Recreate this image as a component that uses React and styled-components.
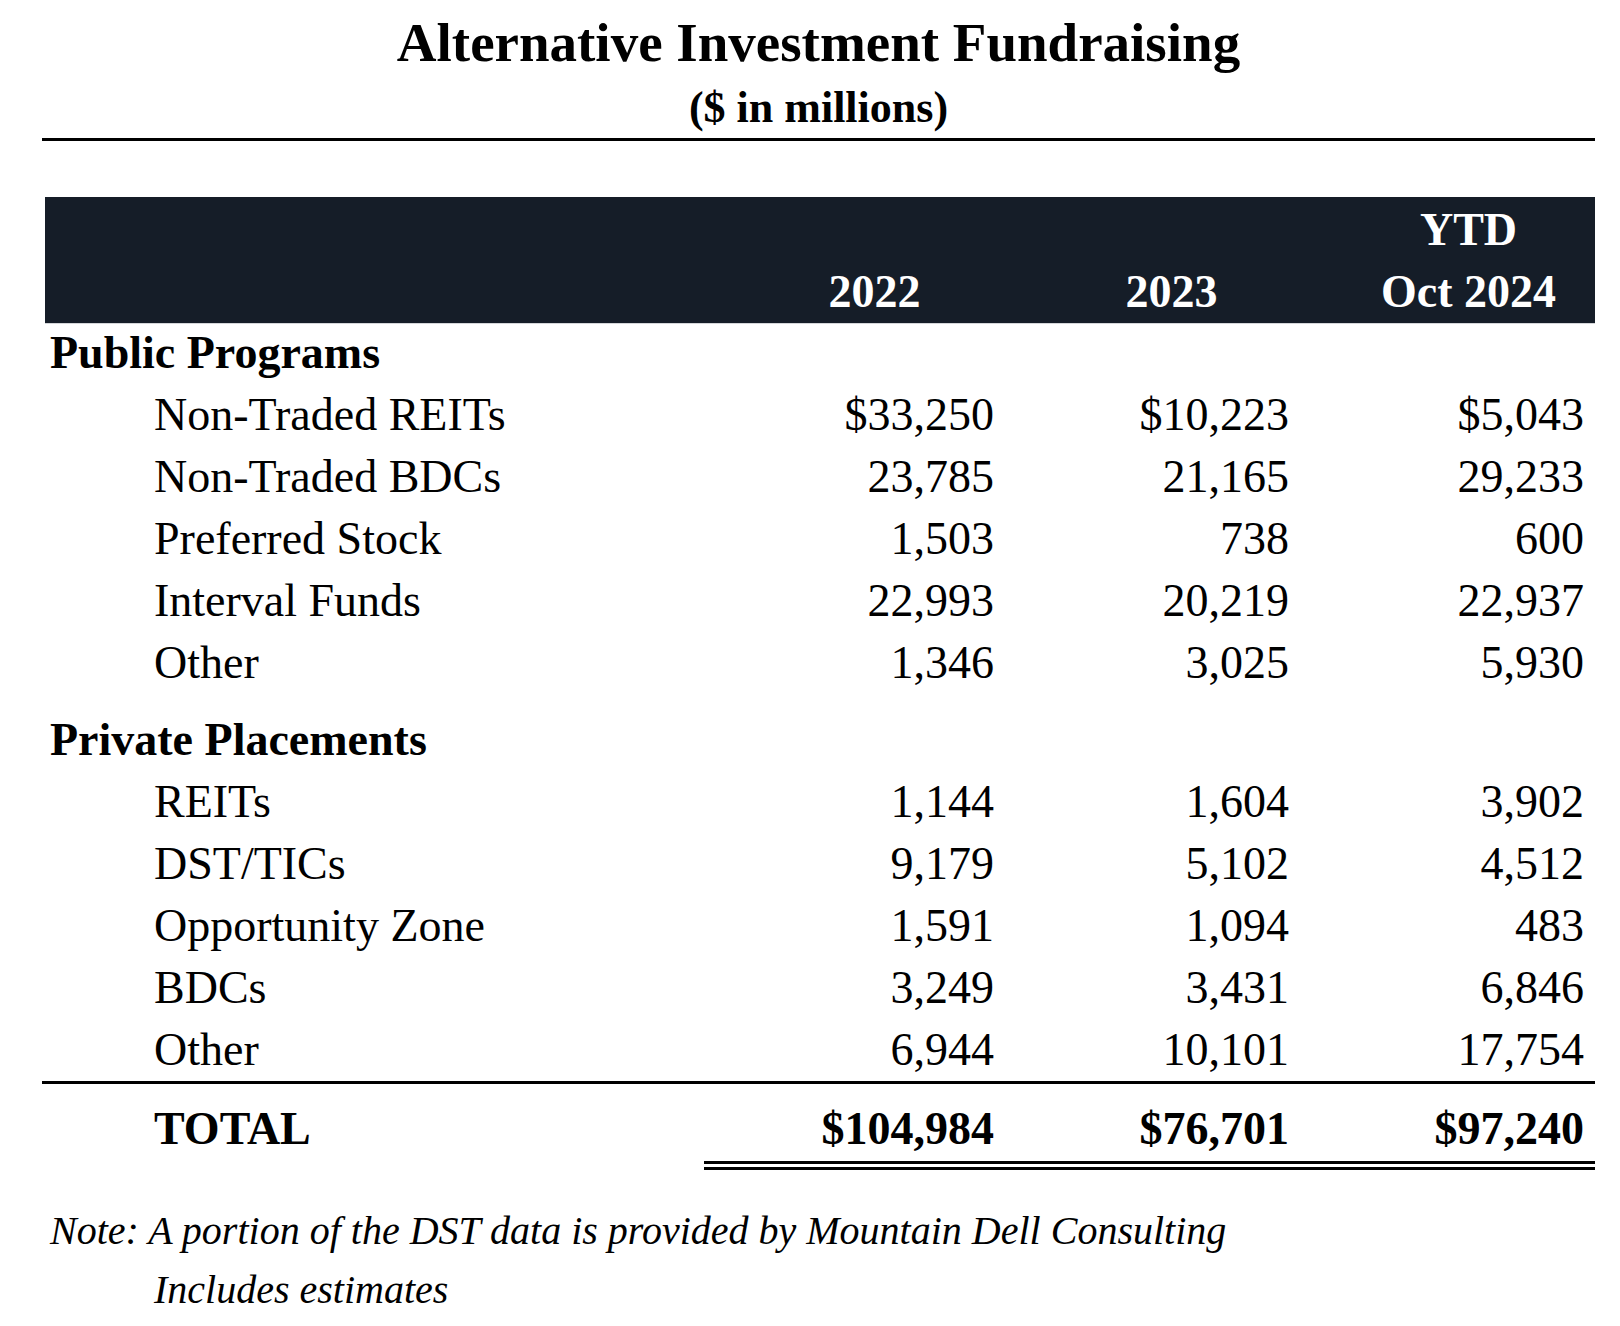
import React from "react";
import styled, { createGlobalStyle } from "styled-components";

// FUNDRAISING SUMMARY TABLE

const publicRows = [
  { label: "Non-Traded REITs", values: ["$33,250", "$10,223", "$5,043"] },
  { label: "Non-Traded BDCs", values: ["23,785", "21,165", "29,233"] },
  { label: "Preferred Stock", values: ["1,503", "738", "600"] },
  { label: "Interval Funds", values: ["22,993", "20,219", "22,937"] },
  { label: "Other", values: ["1,346", "3,025", "5,930"] },
];

const privateRows = [
  { label: "REITs", values: ["1,144", "1,604", "3,902"] },
  { label: "DST/TICs", values: ["9,179", "5,102", "4,512"] },
  { label: "Opportunity Zone", values: ["1,591", "1,094", "483"] },
  { label: "BDCs", values: ["3,249", "3,431", "6,846"] },
  { label: "Other", values: ["6,944", "10,101", "17,754"] },
];

const totals = ["$104,984", "$76,701", "$97,240"];

// right padding of each value column
const colPad = [7, 9, 11];

const App = () => {
  return (
    <>
      <GlobalStyle />
      <Page>
        <Title>Alternative Investment Fundraising</Title>
        <Subtitle>($ in millions)</Subtitle>
        <TopRule />

        <Table>
          <HeaderBand>
            <HeadRow>
              <span />
              <HeadCell>2022</HeadCell>
              <HeadCell>2023</HeadCell>
              <HeadCell>
                YTD
                <br />
                Oct 2024
              </HeadCell>
            </HeadRow>
          </HeaderBand>

          <Row>
            <SectionLabel>Public Programs</SectionLabel>
          </Row>
          {publicRows.map((row, i) => (
            <Row key={"pub" + i}>
              <ItemLabel>{row.label}</ItemLabel>
              {row.values.map((v, j) => (
                <Value key={j} $pad={colPad[j]}>
                  {v}
                </Value>
              ))}
            </Row>
          ))}

          <Row $spaced>
            <SectionLabel>Private Placements</SectionLabel>
          </Row>
          {privateRows.map((row, i) => (
            <Row key={"priv" + i} $last={i === privateRows.length - 1}>
              <ItemLabel>{row.label}</ItemLabel>
              {row.values.map((v, j) => (
                <Value key={j} $pad={colPad[j]}>
                  {v}
                </Value>
              ))}
            </Row>
          ))}

          <TotalRow>
            <TotalLabel>TOTAL</TotalLabel>
            {totals.map((v, j) => (
              <TotalValue key={j} $pad={colPad[j]}>
                {v}
              </TotalValue>
            ))}
          </TotalRow>
        </Table>

        <Notes>
          <Note>Note: A portion of the DST data is provided by Mountain Dell Consulting</Note>
          <Note $indent>Includes estimates</Note>
        </Notes>
      </Page>
    </>
  );
};

const GlobalStyle = createGlobalStyle`
  body {
    margin: 0;
    background: #ffffff;
    color: #000000;
    font-family: "Liberation Serif", "Times New Roman", serif;
  }
`;

const Page = styled.div`
  width: 1553px;
  margin-left: 42px;
  padding-top: 11px;
`;

const Title = styled.div`
  text-align: center;
  font-size: 55px;
  line-height: 64px;
  font-weight: bold;
`;

const Subtitle = styled.div`
  margin-top: 5px;
  text-align: center;
  font-size: 44px;
  line-height: 56px;
  font-weight: bold;
`;

const TopRule = styled.div`
  margin-top: 2px;
  height: 3px;
  background: #000000;
`;

const Table = styled.div`
  margin-top: 56px;
  margin-left: 3px;
  display: flex;
  flex-direction: column;
`;

const HeaderBand = styled.div`
  background: #151d28;
  color: #ffffff;
  padding: 2px 0 0 0;
  border-bottom: 1px solid #d4d6d9;
`;

const HeadRow = styled.div`
  display: grid;
  grid-template-columns: 1fr repeat(3, 297px);
  align-items: end;
  font-size: 46px;
  line-height: 62px;
`;

const HeadCell = styled.div`
  text-align: center;
  padding-left: 44px;
  font-weight: bold;
`;

const Row = styled.div`
  display: grid;
  grid-template-columns: 1fr repeat(3, 297px);
  align-items: end;
  font-size: 46px;
  line-height: 58px;
  padding-bottom: ${(p) => (p.$last ? "2px" : "4px")};
  margin-top: ${(p) => (p.$spaced ? "15px" : "0")};
  border-bottom: ${(p) => (p.$last ? "3px solid #000" : "none")};
  margin-left: ${(p) => (p.$last ? "-3px" : "0")};
  padding-left: ${(p) => (p.$last ? "3px" : "0")};
`;

const SectionLabel = styled.div`
  padding-left: 5px;
  font-weight: bold;
  white-space: nowrap;
`;

const ItemLabel = styled.div`
  padding-left: 109px;
  white-space: nowrap;
`;

const Value = styled.div`
  text-align: right;
  padding-right: ${(p) => p.$pad}px;
`;

const TotalRow = styled.div`
  display: grid;
  grid-template-columns: 1fr repeat(3, 297px);
  font-size: 46px;
  line-height: 58px;
  font-weight: bold;
  padding-top: 16px;
`;

const TotalLabel = styled.div`
  padding-left: 109px;
  padding-bottom: 3px;
`;

const TotalValue = styled.div`
  text-align: right;
  padding-right: ${(p) => p.$pad}px;
  padding-bottom: 3px;
  border-bottom: 9px double #000000;
`;

const Notes = styled.div`
  margin-top: 31px;
  display: flex;
  flex-direction: column;
  font-size: 40px;
  line-height: 59px;
  font-style: italic;
`;

const Note = styled.div`
  padding-left: ${(p) => (p.$indent ? "112px" : "8px")};
  white-space: nowrap;
`;

export default App;
